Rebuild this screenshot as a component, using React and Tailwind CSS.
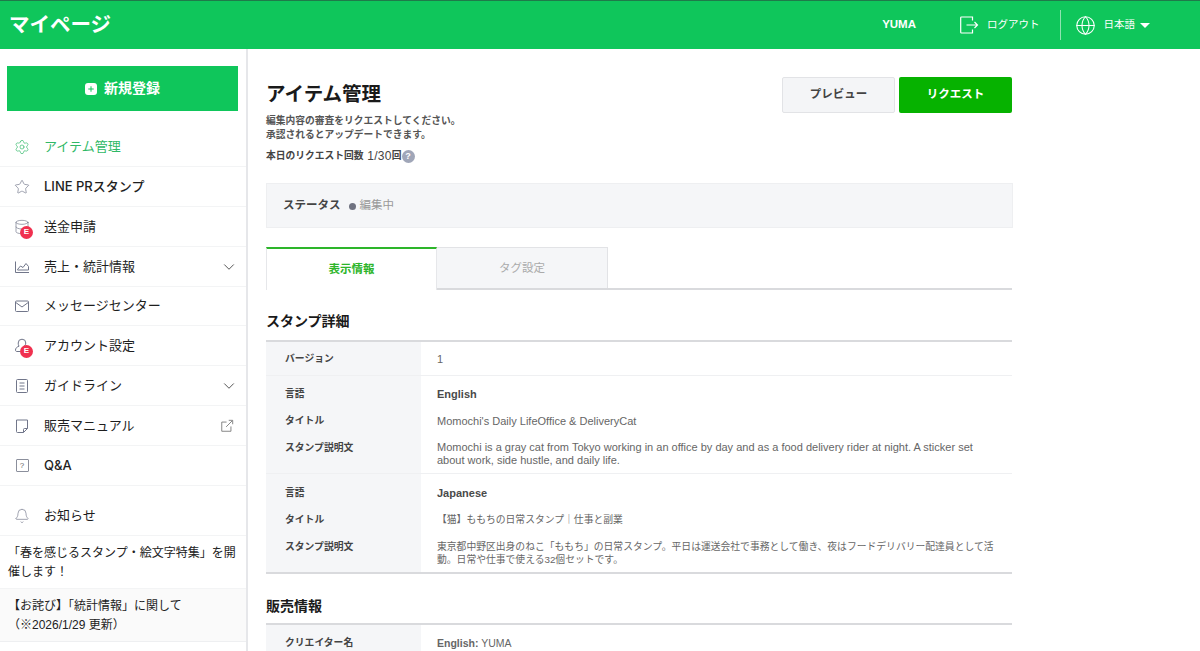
import React from "react";
import { Settings, Star, Database, Bell, ChevronDown, Globe, Plus } from "lucide-react";

const Svg = ({ size = 16, className = "", children }) => (
  <svg width={size} height={size} viewBox="0 0 16 16" fill="none" stroke="currentColor" strokeWidth="1" className={className}>
    {children}
  </svg>
);

const ChartIcon = (props) => (
  <Svg {...props}>
    <path d="M1.5 2.5v11h13.5" />
    <path d="M3.5 10.5l3-3.5 2.5 1.5 3-4 2.5 3v3.5h-11z" />
  </Svg>
);

const MailIcon = (props) => (
  <Svg {...props}>
    <rect x="1.5" y="3" width="13" height="10.5" rx="1" />
    <path d="M1.8 4.5l6.2 4.5 6.2-4.5" />
  </Svg>
);

const UserIcon = (props) => (
  <Svg {...props}>
    <path d="M5 8.2C4.400 7.400 4.200 6 4.200 5a3.800 3.800 0 0 1 7.600 0c0 1.200-.6 2.400-1.500 3.200" />
    <path d="M5 8.200c-2 .6-3.500 2-3.500 3.800 0 1 .5 1.500 1.500 1.500h3.500" />
  </Svg>
);

const DocIcon = (props) => (
  <Svg {...props}>
    <rect x="2.5" y="1.5" width="11" height="13" rx="1" />
    <path d="M5.500 5h5M5.500 8h5M5.500 11h5" />
  </Svg>
);

const NoteIcon = (props) => (
  <Svg {...props}>
    <path d="M13.500 2v8.500l-4 4H3.500a1 1 0 0 1-1-1V2z" />
    <path d="M13.500 10.500h-3a1 1 0 0 0-1 1v3" />
  </Svg>
);

const DoorIcon = (props) => (
  <svg width="20" height="20" viewBox="0 0 20 20" fill="none" stroke="currentColor" strokeWidth="1.2" className={props.className}>
    <path d="M13.500 5.500V2H2.500a.8.8 0 0 0-.8.8v14.400a.8.8 0 0 0 .8.8h11v-3.500" />
    <path d="M7.500 10h11M15.500 7l3 3-3 3" />
  </svg>
);

const ExternalIcon = (props) => (
  <Svg {...props}>
    <path d="M7.500 3.500H2v10.500h10.500V8.500" />
    <path d="M7 9l7-7M10 1.500h4.500V6" />
  </Svg>
);

const Badge = () => (
  <span className="absolute left-[6px] top-[7px] flex h-[13px] w-[13px] items-center justify-center rounded-full bg-[#f0304f] text-[8px] font-bold leading-none text-white">
    E
  </span>
);

const HelpBox = () => (
  <span className="flex h-[13px] w-[13px] shrink-0 items-center justify-center rounded-[1px] border border-[#8b8f9c] text-[8px] leading-none text-[#666]">
    ?
  </span>
);

const menu = [
  { label: "アイテム管理", Icon: Settings, active: true, h: "h-[41px] pt-[2px]" },
  { label: "LINE PRスタンプ", Icon: Star, latin: true, h: "h-[40px]" },
  { label: "送金申請", Icon: Database, badge: true, h: "h-[40px]" },
  { label: "売上・統計情報", Icon: ChartIcon, chevron: true, h: "h-[40px]" },
  { label: "メッセージセンター", Icon: MailIcon, h: "h-[39px]" },
  { label: "アカウント設定", Icon: UserIcon, badge: true, h: "h-[40px]" },
  { label: "ガイドライン", Icon: DocIcon, chevron: true, h: "h-[40px]" },
  { label: "販売マニュアル", Icon: NoteIcon, external: true, h: "h-[40px]" },
  { label: "Q&A", Icon: null, latin: true, h: "h-[40px]" },
];

const Sidebar = () => (
  <aside className="w-[248px] shrink-0 border-r-2 border-[#e6e7ea]">
    <div className="px-[7px] pb-[15px] pt-[17px]">
      <button className="flex h-[45px] w-[231px] items-center justify-center gap-[7px] bg-[#0fc65b] text-[14px] font-bold text-white">
        <span className="flex h-[12px] w-[12px] items-center justify-center rounded-[3px] bg-white">
          <Plus size={8} strokeWidth={3} className="text-[#0fc65b]" />
        </span>
        新規登録
      </button>
    </div>
    <nav>
      {menu.map(({ label, Icon, active, badge, chevron, external, latin, h }) => (
        <div
          key={label}
          className={`flex items-center border-b border-[#f3f4f5] pl-[14px] pr-[8px] text-[13px] ${h} ${active ? "text-[#2fb866]" : "text-[#1e1e1e]"}`}
        >
          <span className="relative mr-[14px] flex h-[16px] w-[16px] items-center justify-center">
            {Icon ? (
              <Icon size={16} strokeWidth={1} className={active ? "text-[#2fb866]" : "text-[#71768a]"} />
            ) : (
              <HelpBox />
            )}
            {badge && <Badge />}
          </span>
          <span className={latin ? "font-['Inter','Noto_Sans_CJK_JP',sans-serif] font-medium" : ""}>{label}</span>
          {chevron && <ChevronDown size={18} strokeWidth={1.2} className="ml-auto text-[#444]" />}
          {external && <ExternalIcon size={14} className="ml-auto mr-[4px] text-[#777]" />}
        </div>
      ))}
    </nav>
    <div className="mt-[10px] flex h-[40px] items-center border-b border-[#f3f4f5] pl-[14px] text-[13px] text-[#1e1e1e]">
      <Bell size={16} strokeWidth={1} className="mr-[14px] text-[#71768a]" />
      お知らせ
    </div>
    <div className="h-[53px] border-b border-[#f3f4f5] px-[8px] pt-[8px] text-[12px] leading-[19px] text-[#222]">
      「春を感じるスタンプ・絵文字特集」を開催します！
    </div>
    <div className="h-[53px] border-b border-[#eeeff1] bg-[#fafafa] px-[8px] pt-[8px] text-[12px] leading-[19px] text-[#222]">
      【お詫び】「統計情報」に関して
      <br />
      （※2026/1/29 更新）
    </div>
  </aside>
);

const Row = ({ label, children, bold, valueSize = "text-[11px]", className = "leading-[14px]" }) => (
  <div className={`flex ${className}`}>
    <div className="w-[155px] shrink-0 pl-[19px] text-[9.8px] font-bold text-[#444]">{label}</div>
    <div className={`w-[575px] pl-[16px] ${valueSize} ${bold ? "font-bold text-[#4a4a4a]" : "text-[#666]"}`}>{children}</div>
  </div>
);

const Block = ({ lang, title, desc, border, valueSize }) => (
  <div
    className={`bg-[linear-gradient(90deg,#f5f6f8_155px,#ffffff_155px)] ${border ? "h-[98px] border-b border-[#eff0f2] pt-[11px]" : "h-[100px] border-b-2 border-[#d9dadd] pt-[12px]"}`}
  >
    <Row label="言語" bold>{lang}</Row>
    <Row label="タイトル" valueSize={valueSize} className="mt-[13px] leading-[14px]">{title}</Row>
    <Row label="スタンプ説明文" valueSize={valueSize} className="mt-[13px] leading-[13px]">{desc}</Row>
  </div>
);

export default function App() {
  return (
    <div className="flex h-[651px] flex-col overflow-hidden bg-white font-['Liberation_Sans','Noto_Sans_CJK_JP',sans-serif]">
      <header className="flex h-[49px] shrink-0 items-center border-t border-[#1f7a4a] bg-[#0fc65b] text-white">
        <div className="pl-[9px] text-[20.5px] font-bold">マイページ</div>
        <div className="ml-auto flex items-center pr-[50px]">
          <span className="text-[11.5px] font-bold">YUMA</span>
          <DoorIcon className="ml-[43px]" />
          <span className="ml-[8px] text-[10.5px]">ログアウト</span>
          <span className="ml-[20px] h-[30px] w-px bg-[#8fe3b1]" />
          <Globe size={21} strokeWidth={1.2} className="ml-[14px]" />
          <span className="ml-[8px] text-[10.5px]">日本語</span>
          <span className="ml-[5px] h-0 w-0 border-x-[5px] border-t-[5px] border-x-transparent border-t-white" />
        </div>
      </header>
      <div className="flex min-h-0 flex-1">
        <Sidebar />
        <main className="w-[765px] pl-[18px] pt-[28px]">
          <div className="flex justify-between">
            <div>
              <h1 className="mt-[5px] text-[19.5px] font-bold leading-[24px] text-[#1a1a1a]">アイテム管理</h1>
              <p className="mt-[8px] text-[9.75px] font-bold leading-[14px] text-[#555]">
                編集内容の審査をリクエストしてください。
                <br />
                承認されるとアップデートできます。
              </p>
              <p className="mb-[1px] mt-[7px] flex items-center text-[9.75px] font-bold leading-[14px] text-[#444]">
                本日のリクエスト回数&nbsp;<span className="ml-[1px] text-[12px] font-normal tracking-[0.3px]">1/30</span>回
                <span className="flex h-[13px] w-[13px] items-center justify-center rounded-full bg-[#a0a6b8] text-[9px] text-white">?</span>
              </p>
            </div>
            <div className="flex gap-[4px] pr-[1px]">
              <button className="h-[36px] w-[113px] rounded-[2px] border border-[#e2e3e6] bg-[#f4f5f7] text-[11.5px] font-bold text-[#444]">プレビュー</button>
              <button className="h-[36px] w-[113px] rounded-[2px] bg-[#06b200] text-[11.5px] font-bold text-white">リクエスト</button>
            </div>
          </div>
          <div className="mt-[19px] flex h-[45px] items-center border border-[#eeeff1] bg-[#f5f6f8] pl-[16px] pt-[1px] text-[11.5px]">
            <span className="font-bold text-[#444]">ステータス</span>
            <span className="ml-[8px] h-[7px] w-[7px] rounded-full bg-[#6f7280]" />
            <span className="ml-[4px] text-[#999]">編集中</span>
          </div>
          <div className="mt-[19px] flex h-[43px] w-[746px] border-b-2 border-[#d9dadd]">
            <div className="z-10 flex h-[43px] w-[171px] items-center justify-center border-x border-t-2 border-[#e6e7ea] border-t-[#2db52a] bg-white text-[11.5px] font-bold text-[#2db52a]">表示情報</div>
            <div className="flex w-[171px] items-center justify-center border-r border-t border-[#e2e3e6] bg-[#f5f6f8] pt-[1px] text-[11.5px] text-[#aaa]">タグ設定</div>
          </div>
          <h2 className="mt-[21px] text-[14px] font-bold leading-[20px] text-[#1a1a1a]">スタンプ詳細</h2>
          <div className="mt-[9px] w-[746px] border-t-2 border-[#d9dadd]">
            <div className="flex h-[34px] items-center border-b border-[#eff0f2] bg-[linear-gradient(90deg,#f5f6f8_155px,#ffffff_155px)]">
              <Row label="バージョン">1</Row>
            </div>
            <Block
              border
              lang="English"
              title="Momochi's Daily LifeOffice & DeliveryCat"
              desc="Momochi is a gray cat from Tokyo working in an office by day and as a food delivery rider at night. A sticker set about work, side hustle, and daily life."
            />
            <Block
              lang="Japanese"
              valueSize="text-[9.8px]"
              title="【猫】ももちの日常スタンプ｜仕事と副業"
              desc="東京都中野区出身のねこ「ももち」の日常スタンプ。平日は運送会社で事務として働き、夜はフードデリバリー配達員として活動。日常や仕事で使える32個セットです。"
            />
          </div>
          <h2 className="mt-[22px] text-[14px] font-bold leading-[20px] text-[#1a1a1a]">販売情報</h2>
          <div className="mt-[7px] w-[746px] border-t-2 border-[#d9dadd]">
            <div className="flex h-[36px] items-center bg-[linear-gradient(90deg,#f5f6f8_155px,#ffffff_155px)]">
              <Row label="クリエイター名" valueSize="text-[10.5px]"><span className="font-bold">English:</span> YUMA</Row>
            </div>
          </div>
        </main>
      </div>
    </div>
  );
}
